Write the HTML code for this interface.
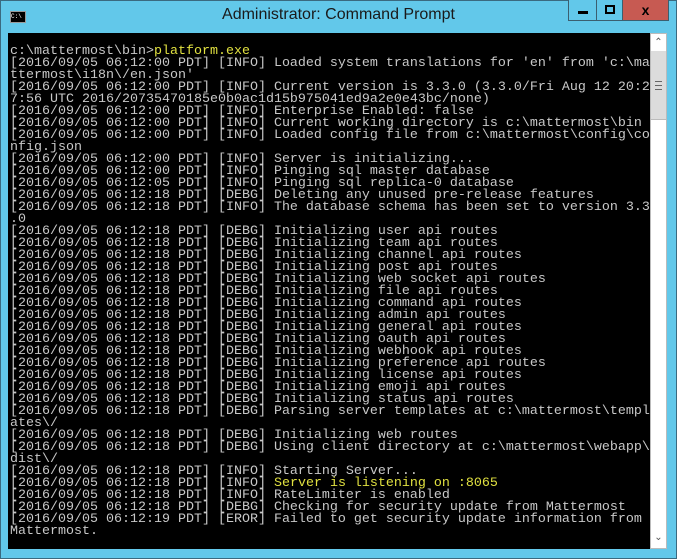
<!DOCTYPE html>
<html><head><style>
body{margin:0;width:677px;height:559px;overflow:hidden;background:#62c8ea;position:relative;font-family:"Liberation Sans",sans-serif}
.frame{position:absolute;left:0;top:0;width:675px;height:557px;border:1px solid #3a6a80;background:#62c8ea}
.title{position:absolute;left:0;width:677px;top:6px;text-align:center;font-size:16px;color:#1a1a1a}
.btn{position:absolute;top:0;height:21px;border:1px solid #3b5f70;border-top:none;box-sizing:border-box}
.con{position:absolute;left:8px;top:33px;width:642px;height:516px;background:#000}
pre{margin:0;position:absolute;left:2px;top:13px;font-family:"Liberation Mono",monospace;font-size:13.33px;line-height:12px;color:#c8c8c8;letter-spacing:0}
.y{color:#e0e040}
.sb{position:absolute;left:650px;top:33px;width:17px;height:516px;background:#fff;box-sizing:border-box;border:1px solid #bbb}
.sb .t{position:absolute;left:0;top:17px;width:15px;height:68px;background:#dcdcdc;border-bottom:1px solid #bbb}
</style></head><body>
<div class="frame"></div>
<div style="position:absolute;left:10px;top:11px;width:14px;height:10px;background:#000;border:1px solid #999;color:#fff;font-size:6px;line-height:10px;font-family:'Liberation Mono',monospace">C:\</div>
<div class="title">Administrator: Command Prompt</div>
<div class="btn" style="left:568px;width:29px;background:#62c8ea"><div style="position:absolute;left:9px;top:11px;width:10px;height:3px;background:#000"></div></div>
<div class="btn" style="left:596px;width:27px;background:#62c8ea"><div style="position:absolute;left:8px;top:5px;width:6px;height:5px;border:2px solid #000"></div></div>
<div class="btn" style="left:622px;width:47px;background:#c75a52;color:#000;font-weight:bold;font-size:14px;text-align:center;line-height:20px">x</div>
<div class="con"><pre>c:\mattermost\bin&gt;<span class="y">platform.exe</span>
[2016/09/05 06:12:00 PDT] [INFO] Loaded system translations for 'en' from 'c:\ma
ttermost\i18n\/en.json'
[2016/09/05 06:12:00 PDT] [INFO] Current version is 3.3.0 (3.3.0/Fri Aug 12 20:2
7:56 UTC 2016/20735470185e0b0ac1d15b975041ed9a2e0e43bc/none)
[2016/09/05 06:12:00 PDT] [INFO] Enterprise Enabled: false
[2016/09/05 06:12:00 PDT] [INFO] Current working directory is c:\mattermost\bin
[2016/09/05 06:12:00 PDT] [INFO] Loaded config file from c:\mattermost\config\co
nfig.json
[2016/09/05 06:12:00 PDT] [INFO] Server is initializing...
[2016/09/05 06:12:00 PDT] [INFO] Pinging sql master database
[2016/09/05 06:12:05 PDT] [INFO] Pinging sql replica-0 database
[2016/09/05 06:12:18 PDT] [DEBG] Deleting any unused pre-release features
[2016/09/05 06:12:18 PDT] [INFO] The database schema has been set to version 3.3
.0
[2016/09/05 06:12:18 PDT] [DEBG] Initializing user api routes
[2016/09/05 06:12:18 PDT] [DEBG] Initializing team api routes
[2016/09/05 06:12:18 PDT] [DEBG] Initializing channel api routes
[2016/09/05 06:12:18 PDT] [DEBG] Initializing post api routes
[2016/09/05 06:12:18 PDT] [DEBG] Initializing web socket api routes
[2016/09/05 06:12:18 PDT] [DEBG] Initializing file api routes
[2016/09/05 06:12:18 PDT] [DEBG] Initializing command api routes
[2016/09/05 06:12:18 PDT] [DEBG] Initializing admin api routes
[2016/09/05 06:12:18 PDT] [DEBG] Initializing general api routes
[2016/09/05 06:12:18 PDT] [DEBG] Initializing oauth api routes
[2016/09/05 06:12:18 PDT] [DEBG] Initializing webhook api routes
[2016/09/05 06:12:18 PDT] [DEBG] Initializing preference api routes
[2016/09/05 06:12:18 PDT] [DEBG] Initializing license api routes
[2016/09/05 06:12:18 PDT] [DEBG] Initializing emoji api routes
[2016/09/05 06:12:18 PDT] [DEBG] Initializing status api routes
[2016/09/05 06:12:18 PDT] [DEBG] Parsing server templates at c:\mattermost\templ
ates\/
[2016/09/05 06:12:18 PDT] [DEBG] Initializing web routes
[2016/09/05 06:12:18 PDT] [DEBG] Using client directory at c:\mattermost\webapp\
dist\/
[2016/09/05 06:12:18 PDT] [INFO] Starting Server...
[2016/09/05 06:12:18 PDT] [INFO] <span class="y">Server is listening on :8065</span>
[2016/09/05 06:12:18 PDT] [INFO] RateLimiter is enabled
[2016/09/05 06:12:18 PDT] [DEBG] Checking for security update from Mattermost
[2016/09/05 06:12:19 PDT] [EROR] Failed to get security update information from
Mattermost.</pre></div>
<div class="sb"><div class="t"><div style="position:absolute;left:4px;top:30px;width:7px;height:7px;border-top:1px solid #666;border-bottom:1px solid #666"><div style="margin-top:3px;height:1px;background:#666"></div></div></div>
<div style="position:absolute;left:0;top:0;width:15px;height:17px;text-align:center;font-size:10px;line-height:18px;color:#555">&#8963;</div>
<div style="position:absolute;left:0;bottom:0;width:15px;height:17px;text-align:center;font-size:10px;line-height:14px;color:#555">&#8964;</div>
</div>
</body></html>
